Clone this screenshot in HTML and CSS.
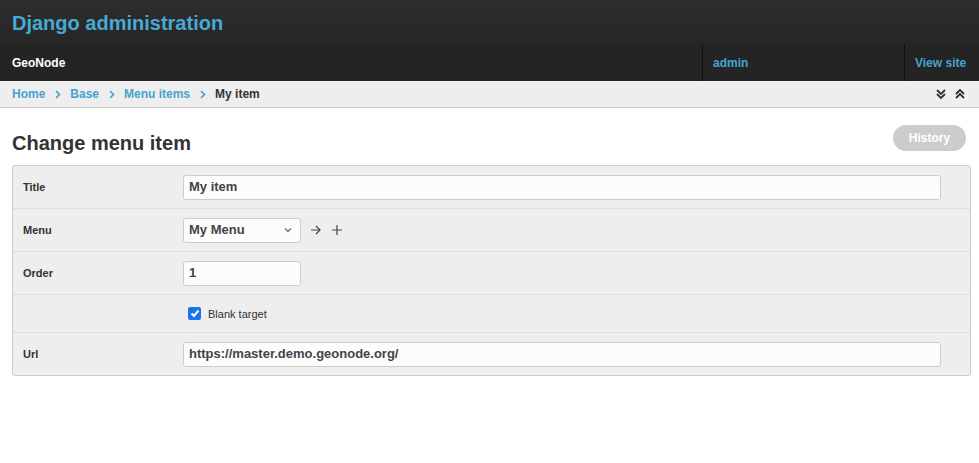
FILE: index.html
```html
<!DOCTYPE html>
<html>
<head>
<meta charset="utf-8">
<link rel="stylesheet" href="styles.css">
</head>
<body>
<div class="header">
  <div class="branding">Django administration</div>
  <div class="subbar">
    <div class="site">GeoNode</div>
    <div class="usertools">
      <a class="tool user">admin</a>
      <a class="tool view">View site</a>
    </div>
  </div>
</div>
<div class="breadcrumbs">
  <div class="crumbs">
    <a>Home</a><svg class="sep" width="6" height="9" viewBox="0 0 6 9"><path d="M1 1 L4.5 4.5 L1 8" fill="none" stroke="#44a4cf" stroke-width="1.7"/></svg>
    <a>Base</a><svg class="sep" width="6" height="9" viewBox="0 0 6 9"><path d="M1 1 L4.5 4.5 L1 8" fill="none" stroke="#44a4cf" stroke-width="1.7"/></svg>
    <a>Menu items</a><svg class="sep" width="6" height="9" viewBox="0 0 6 9"><path d="M1 1 L4.5 4.5 L1 8" fill="none" stroke="#44a4cf" stroke-width="1.7"/></svg>
    <span class="current">My item</span>
  </div>
  <div class="toggles">
    <svg width="12" height="12" viewBox="0 0 12 12"><path d="M2 2 L6 6 L10 2 M2 6 L6 10 L10 6" fill="none" stroke="#333" stroke-width="1.8"/></svg>
    <svg width="12" height="12" viewBox="0 0 12 12"><path d="M2 6 L6 2 L10 6 M2 10 L6 6 L10 10" fill="none" stroke="#333" stroke-width="1.8"/></svg>
  </div>
</div>
<div class="content">
  <div class="titlebar">
    <h1>Change menu item</h1>
    <span class="history">History</span>
  </div>
  <div class="fieldset">
    <div class="row">
      <div class="label">Title</div>
      <div class="field"><div class="input wide">My item</div></div>
    </div>
    <div class="row">
      <div class="label">Menu</div>
      <div class="field">
        <div class="input select">My Menu
          <svg class="caret" width="8" height="6" viewBox="0 0 8 6"><path d="M1 1.5 L4 4.5 L7 1.5" fill="none" stroke="#666" stroke-width="1.2"/></svg>
        </div>
        <svg class="act" width="12" height="12" viewBox="0 0 12 12"><path d="M1 6 H10 M6 2 L10 6 L6 10" fill="none" stroke="#444" stroke-width="1.2"/></svg>
        <svg class="act" width="12" height="12" viewBox="0 0 12 12"><path d="M6 1 V11 M1 6 H11" fill="none" stroke="#444" stroke-width="1.2"/></svg>
      </div>
    </div>
    <div class="row">
      <div class="label">Order</div>
      <div class="field"><div class="input small">1</div></div>
    </div>
    <div class="row check">
      <div class="label"></div>
      <div class="field">
        <span class="checkbox"><svg width="10" height="9" viewBox="0 0 10 9"><path d="M1.5 4.5 L4 7 L8.5 1.5" fill="none" stroke="#fff" stroke-width="2"/></svg></span>
        <span class="cblabel">Blank target</span>
      </div>
    </div>
    <div class="row last">
      <div class="label">Url</div>
      <div class="field"><div class="input wide">https://master.demo.geonode.org/</div></div>
    </div>
  </div>
</div>
</body>
</html>
```

FILE: styles.css
```css
* { box-sizing: border-box; }
body {
  margin: 0;
  font-family: "Liberation Sans", Arial, sans-serif;
  color: #333;
  background: #fff;
}
a { color: #44a4cf; text-decoration: none; }
.header {
  background: linear-gradient(#2e2e2e, #1f1f1f);
}
.branding {
  height: 44px;
  padding: 12px 12px 0;
  font-size: 20px;
  font-weight: bold;
  color: #47a9d4;
}
.subbar {
  height: 37px;
  display: flex;
  justify-content: space-between;
  align-items: stretch;
  background: #242424;
}
.site {
  padding: 0 12px;
  display: flex;
  align-items: center;
  color: #fff;
  font-weight: bold;
  font-size: 12px;
}
.usertools { display: flex; }
.tool {
  display: flex;
  align-items: center;
  font-size: 12px;
  font-weight: bold;
  border-left: 1px solid #0f0f0f;
}
.tool.user { width: 202px; padding-left: 10px; }
.tool.view { width: 75px; padding-left: 10px; }
.breadcrumbs {
  height: 27px;
  background: #eee;
  border-bottom: 1px solid #ccc;
  display: flex;
  justify-content: space-between;
  align-items: center;
  padding: 0 13px 0 12px;
  font-size: 12px;
  font-weight: bold;
}
.crumbs { display: flex; align-items: center; }
.sep { margin: 0 9px 0 10px; }
.current { color: #333; }
.toggles { display: flex; gap: 7px; }
.content { padding: 0 8px 0 12px; }
.titlebar {
  display: flex;
  justify-content: space-between;
  align-items: flex-start;
  padding-top: 17px;
  height: 57px;
}
h1 {
  margin: 7px 0 0;
  font-size: 20px;
  color: #333;
  font-weight: bold;
}
.history {
  margin-right: 5px;
  background: #ccc;
  color: #fff;
  font-weight: bold;
  font-size: 12px;
  border-radius: 14px;
  width: 73px;
  height: 26px;
  display: flex;
  align-items: center;
  justify-content: center;
}
.fieldset {
  border: 1px solid #ccc;
  border-radius: 3px;
  background: #eee;
}
.row {
  height: 43px;
  display: flex;
  align-items: center;
  border-bottom: 1px solid #ddd;
}
.row.check { height: 38px; }
.row.last { border-bottom: none; height: 42px; }
.label {
  width: 170px;
  padding-left: 10px;
  font-size: 11px;
  font-weight: bold;
  color: #333;
}
.field { display: flex; align-items: center; }
.input {
  height: 25px;
  background: #fcfcfc;
  border: 1px solid #ccc;
  border-radius: 3px;
  padding: 0 5px 1px;
  font-size: 13px;
  font-weight: bold;
  color: #444;
  display: flex;
  align-items: center;
}
.input.wide { width: 758px; }
.input.small { width: 118px; }
.input.select { width: 118px; justify-content: space-between; padding-right: 8px; }
.act { margin-left: 9px; }
.check .field { padding-left: 5px; }
.checkbox {
  width: 13px;
  height: 13px;
  border-radius: 2px;
  background: #1a73e8;
  display: flex;
  align-items: center;
  justify-content: center;
}
.cblabel {
  margin-left: 7px;
  font-size: 11px;
  color: #333;
}
```
